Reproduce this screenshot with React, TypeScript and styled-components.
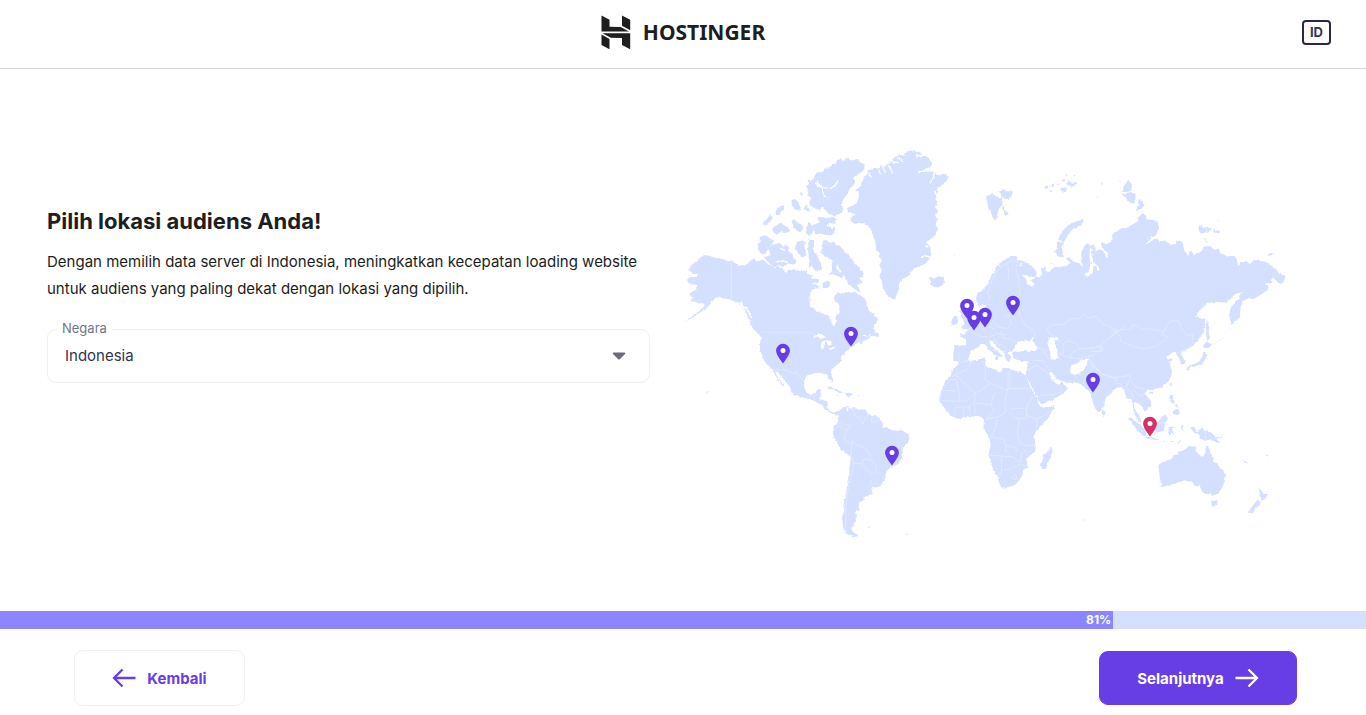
import React from "react";
import styled, { createGlobalStyle } from "styled-components";

const GlobalStyle = createGlobalStyle`
  *, *::before, *::after { box-sizing: border-box; }
  body {
    margin: 0;
    background: #fff;
    color: #1d1e20;
    font-family: Inter, "Liberation Sans", sans-serif;
  }
  button, select { font-family: inherit; }
`;

const Page = styled.div`
  min-height: 100vh;
  display: flex;
  flex-direction: column;
`;

const Header = styled.header`
  display: grid;
  grid-template-columns: 1fr auto 1fr;
  align-items: center;
  padding: 15px 35px 18px;
  border-bottom: 1px solid #d5d5d9;
`;

const Logo = styled.a`
  grid-column: 2;
  display: flex;
  align-items: center;
  gap: 12px;
  color: #1d1e20;
  text-decoration: none;
  font-family: "Noto Sans", sans-serif;
  font-size: 21px;
  line-height: 35px;
  font-weight: 700;
`;

const LanguageButton = styled.button`
  justify-self: end;
  padding: 0 6px;
  border: 2px solid #2c2545;
  border-radius: 4px;
  background: #fff;
  color: #36344d;
  font-size: 13px;
  line-height: 21px;
  font-weight: 700;
`;

const Main = styled.main`
  flex: 1;
  display: grid;
  grid-template-columns: 1fr 1fr;
  column-gap: 35px;
  align-content: center;
  padding: 0 78px 0 47px;
`;

const Intro = styled.section`
  padding-top: 65px;
`;

const Title = styled.h1`
  margin: 0 0 11px;
  font-size: 22px;
  line-height: 32px;
  font-weight: 700;
`;

const Lead = styled.p`
  margin: 0 0 27px;
  font-size: 15px;
  line-height: 27px;
`;

const Field = styled.div`
  position: relative;
`;

const FieldLabel = styled.label`
  position: absolute;
  top: -10px;
  left: 10px;
  padding: 0 5px;
  background: #fff;
  color: #727586;
  font-size: 13px;
  line-height: 18px;
`;

const Select = styled.select`
  display: block;
  width: 100%;
  height: 54px;
  padding: 0 48px 0 17px;
  appearance: none;
  border: 1px solid #f0f0f3;
  border-radius: 9px;
  background: #fff;
  color: #36344d;
  font-size: 15px;
`;

const Caret = styled.svg`
  position: absolute;
  top: 23px;
  right: 24px;
  width: 14px;
  height: 8px;
  pointer-events: none;
`;

const MapSvg = styled.svg`
  display: block;
  width: 100%;
  height: auto;
`;

const ProgressTrack = styled.div`
  height: 18px;
  background: #d5dfff;
`;

const ProgressFill = styled.div`
  height: 100%;
  padding-right: 2px;
  background: #8c85ff;
  color: #fff;
  font-size: 12px;
  line-height: 18px;
  font-weight: 700;
  text-align: right;
`;

const Footer = styled.footer`
  display: flex;
  align-items: center;
  justify-content: space-between;
  padding: 21px 69px 9px 74px;
`;

const NavButton = styled.button<{ $primary?: boolean }>`
  display: flex;
  align-items: center;
  justify-content: center;
  gap: 11px;
  height: ${(p) => (p.$primary ? 54 : 56)}px;
  width: ${(p) => (p.$primary ? 198 : 171)}px;
  padding: 0;
  border: 1px solid ${(p) => (p.$primary ? "#673de6" : "#f0f0f3")};
  border-radius: 9px;
  background: ${(p) => (p.$primary ? "#673de6" : "#fff")};
  color: ${(p) => (p.$primary ? "#fff" : "#673de6")};
  font-size: 15px;
  font-weight: 700;
`;

function Arrow({ back }: { back?: boolean }) {
  return (
    <svg width="24" height="20" viewBox="0 0 24 20" fill="none" stroke="currentColor" strokeWidth="2.3" aria-hidden="true">
      <path d={back ? "M10.5 1.5 2 10l8.5 8.5M2 10h21.5" : "M13.500 1.5 22 10l-8.500 8.500M.5 10H22"} />
    </svg>
  );
}

/* Each chart is drawn at three units per map pixel, from its own origin. */
type Chart = { x: number; y: number; land: string[]; water?: string[]; channels?: string[]; borders?: string[] };

const charts: Chart[] = [
  {
    // Alaska, Canada and the arctic archipelago
    x: 680,
    y: 140,
    land: [
      "28,380 36,374 50,362 62,352 75,345 88,347 95,350 105,353 118,355 130,358 142,364 155,362 170,372 182,378 192,374 203,372 214,362 222,354 229,364 240,362 250,360 262,370 275,378 285,385 295,382 305,385 314,392 320,400 324,390 345,388 362,394 380,390 384,402 400,408 392,416 418,418 408,434 420,440 405,446 395,450 388,475 390,500 402,508 415,515 430,522 440,525 450,530 452,545 460,558 468,550 466,532 478,520 478,495 462,478 464,466 475,458 490,460 510,455 530,458 545,468 556,478 566,510 582,524 594,538 583,560 566,570 552,582 530,590 240,590 232,576 222,570 210,548 205,530 194,506 180,490 165,486 150,478 135,476 120,470 108,474 98,482 90,492 80,505 65,514 50,525 32,536 15,542 38,528 52,518 65,508 75,496 72,490 60,492 50,486 35,485 38,474 28,462 38,454 50,448 54,436 38,432 26,430 20,420 30,412 50,410 54,404 40,402 28,392",
      "385,150 378,138 388,132 385,120 400,118 405,105 414,97 430,96 434,84 445,86 455,74 468,68 475,56 490,62 500,53 515,62 530,56 540,64 555,75 553,88 545,95 530,108 520,115 525,130 508,148 500,165 490,178 485,195 490,205 480,222 460,228 444,220 438,210 428,200 418,212 405,205 392,200 388,185 394,174 382,165",
      "240,290 255,286 270,295 283,302 272,316 258,340 245,342 233,328 238,310",
      "265,322 285,312 300,310 310,320 322,315 325,330 338,342 340,354 350,362 344,375 325,370 312,380 298,376 285,382 270,372 252,352 272,346",
      "275,265 288,258 300,248 312,258 325,262 330,274 315,280 302,276 290,284 280,276",
      "248,250 258,240 270,225 280,232 272,242 262,252 252,258",
      "285,215 300,198 312,196 314,208 300,218 304,226 290,224",
      "335,180 345,178 355,186 362,204 354,214 342,204 334,194",
      "372,196 380,192 386,205 388,216 376,210",
      "334,242 345,238 352,250 366,252 370,266 358,276 344,268",
      "385,245 398,256 400,275 388,288 378,278",
      "398,256 418,248 412,236 425,230 440,236 458,230 470,238 466,252 448,248 440,258 462,264 462,280 440,286 420,280 404,284",
      "350,308 364,300 378,308 374,324 380,345 368,352 356,342 344,326",
      "385,300 402,300 402,330 412,350 424,372 426,388 412,396 398,380 386,384 388,362 384,330",
      "425,318 430,302 442,300 452,310 462,302 468,318 478,316 495,336 512,352 526,370 538,384 553,402 548,412 538,412 548,428 532,434 542,458 522,446 510,436 500,428 494,404 480,390 472,372 450,356 436,352 424,338",
      "455,362 474,368 468,384 480,398 496,382 498,406 480,414 462,402 450,404 456,388",
      "428,428 446,422 452,432 444,444 428,444",
      "362,156 368,160 366,166 360,162",
    ],
    water: ["488,414 500,424 510,444 498,440 486,428"],
    channels: [
      "410,124 426,142 450,146 464,138 474,124",
      "426,144 432,168 444,174",
      "424,142 404,128",
      "290,366 308,362 322,368",
      "398,432 412,430",
      "172,486 200,506 216,536",
      "182,482 188,496",
      "316,332 302,324",
    ],
    borders: ["154,362 154,478 178,490 196,516 214,548 222,556", "245,577 385,577 398,582 416,592"],
  },
  {
    // United States, central and south America
    x: 680,
    y: 310,
    land: [
      "222,58 240,60 300,60 530,60 570,40 578,45 560,58 545,64 532,80 550,66 566,60 572,50 580,54 582,66 596,70 596,80 575,78 565,86 545,100 536,96 520,108 500,120 490,136 482,140 485,152 470,166 455,178 452,190 460,208 457,218 448,208 440,192 425,190 410,188 395,192 382,196 373,208 372,230 380,248 392,255 406,250 410,240 425,238 424,250 418,268 430,270 442,276 442,292 448,302 460,308 472,303 480,310 472,318 458,312 446,306 436,298 430,288 416,280 400,272 392,266 380,266 360,260 335,248 330,232 316,214 300,195 290,182 286,186 294,202 304,216 314,230 306,226 290,204 276,176 262,166 252,150 240,120 240,100 246,82 234,66",
      "475,305 490,292 506,288 510,296 520,294 538,299 555,298 562,308 575,318 590,318 602,328 610,345 606,354 622,352 635,360 650,362 665,362 680,370 689,382 684,398 668,415 668,435 655,462 645,466 632,472 618,485 618,500 608,518 598,530 585,534 572,528 578,550 562,558 550,560 552,570 536,578 536,590 540,600 525,606 532,620 522,640 514,656 524,668 535,678 520,682 500,672 490,655 486,630 488,612 494,602 490,585 496,560 500,540 503,510 508,490 510,465 512,440 495,428 480,415 470,394 458,374 462,362 460,350 472,340 476,324",
      "440,233 452,230 466,236 480,242 490,250 476,248 462,238 448,237",
      "494,250 508,248 522,254 512,260 496,257",
      "468,252 478,254 472,257",
      "530,255 538,254 538,258",
      "79,244 85,246 84,251 79,250",
      "560,650 574,648 566,654",
      "676,669 684,673 680,676",
      "402,350 406,350 405,353",
    ],
    water: [
      "402,84 410,74 420,71 430,76 438,82 426,86 414,84",
      "424,96 436,90 434,104 430,118 422,112",
      "438,90 452,94 456,104 444,106",
      "444,116 456,114 466,108 464,114 452,120",
    ],
    channels: ["500,292 504,304", "552,78 572,74"],
    borders: [
      "276,178 318,180 338,190 348,186 362,204 372,212",
      "405,276 402,262 412,254",
      "470,348 484,350 496,362 512,346 494,342",
      "512,346 498,368 492,386 516,404 516,392 530,404 552,412 570,432 572,448 590,470 588,486 596,494",
      "516,404 512,438 522,460 518,480 508,520 500,560 498,610 496,652",
      "522,460 544,462 552,446 570,450",
      "546,464 570,486 574,494 584,486",
      "574,508 572,528",
      "520,296 524,316 540,322 548,342 558,320 568,314",
      "576,320 574,338 590,334 602,332",
      "480,334 490,346",
    ],
  },
  {
    // Greenland and Iceland
    x: 820,
    y: 140,
    land: [
      "80,205 94,198 110,190 116,174 116,156 108,150 120,140 125,125 138,106 145,90 158,88 164,80 176,84 184,74 194,80 205,68 218,66 218,56 235,46 252,44 262,34 285,31 300,35 308,46 325,52 335,68 333,80 320,84 308,92 325,92 342,94 354,106 370,102 385,112 378,124 362,136 350,150 355,162 346,176 352,186 345,200 355,215 345,226 352,240 346,252 354,268 344,286 334,298 316,306 330,318 334,338 330,355 318,368 305,378 288,382 276,392 262,410 245,418 236,438 232,460 225,480 212,474 202,468 194,452 188,440 186,422 178,405 186,392 178,375 186,360 176,350 180,340 168,330 166,305 160,290 154,270 145,258 132,252 118,248 105,252 96,246 90,236 98,228 110,224 96,220 84,212",
      "326,414 334,410 340,418 352,410 366,408 374,418 374,430 362,438 352,444 338,438 330,434 334,426",
      "402,344 404,344 404,347 402,347",
    ],
    channels: [
      "172,80 182,104",
      "186,78 196,98",
      "204,74 220,102",
      "142,96 156,114",
      "330,130 342,108 344,94",
      "294,96 328,92 350,94",
      "232,52 250,64",
      "218,66 236,68",
      "288,48 312,46",
      "302,352 318,348 332,352",
      "316,318 330,322",
      "172,352 186,358",
      "344,152 352,170",
    ],
  },
  {
    // Europe, western Russia and the islands north of it
    x: 940,
    y: 160,
    land: [
      "110,430 108,414 114,398 130,386 148,368 152,350 164,334 172,316 186,304 200,297 210,292 220,286 236,292 232,300 250,303 275,318 290,336 288,350 272,352 256,346 246,344 260,360 260,372 276,380 286,372 274,360 290,350 298,352 306,342 302,326 316,320 318,332 328,336 342,322 360,320 380,318 392,308 378,296 384,292 404,306 418,310 430,322 422,300 424,280 432,260 440,250 450,258 448,290 452,308 448,330 432,345 444,350 458,340 460,318 468,318 472,332 480,330 470,314 460,304 454,284 458,268 450,256 462,256 468,272 480,268 492,274 498,290 504,298 502,276 486,262 482,246 500,252 520,240 515,228 526,214 560,204 560,620 266,620 268,600 248,604 234,600 222,596 216,580 226,570 214,572 204,578 214,590 208,606 198,600 190,576 170,560 158,545 148,540 150,552 165,568 188,588 176,590 172,602 164,596 170,588 146,568 135,552 122,552 116,562 100,568 86,582 88,590 80,602 58,610 52,604 40,602 40,580 44,562 40,556 78,556 78,538 62,530 60,522 74,520 94,502 112,484 130,470 132,450 138,442 146,460 156,470 168,454 176,436 172,410 176,390 190,372 194,358 210,362 208,378 194,396 192,416 206,424 224,424 200,434 196,448 186,450 190,466 168,474 150,474 142,486 122,488 116,460 138,438 128,432 118,440",
      "62,436 82,448 86,480 94,498 86,508 62,508 74,490 60,462",
      "36,480 40,472 52,468 54,488 46,494 34,496",
      "138,108 150,104 158,98 164,108 182,112 188,128 176,148 168,182 158,174 152,154 146,146",
      "176,92 190,88 204,94 218,94 216,108 200,118 186,112",
      "186,142 192,138 196,150 206,160 196,166",
      "430,176 430,186 418,198 400,206 384,224 374,242 364,262 372,292 356,290 344,274 354,264 350,250 358,230 368,212 384,196 404,186 418,182",
      "312,82 322,76 330,82 320,86",
      "326,90 338,92 334,98",
      "332,76 344,70 340,82",
      "348,70 360,72 352,76",
      "360,86 376,82 382,90 368,98",
      "364,60 376,58 372,66",
      "376,42 384,44 378,48",
      "384,62 396,68 410,66 412,74 394,80 384,74",
      "400,46 406,44 404,50",
      "483,70 488,70 488,74 484,74",
      "468,110 474,110 472,113",
      "328,312 334,310 332,316",
      "0,46 18,42 24,54 10,72 0,78",
    ],
    water: [
      "222,566 234,546 250,540 256,550 272,542 274,532 282,532 278,544 294,564 284,572 262,566 244,572 232,572",
      "320,546 334,532 350,532 354,542 342,552 350,564 348,572 356,584 354,600 338,600 332,586 332,570",
    ],
    channels: ["246,310 238,316", "352,240 368,246", "172,310 180,318"],
    borders: [
      "150,420 144,398 156,360 174,330 200,308 212,304 234,302",
      "202,310 206,332 206,358",
      "234,304 228,322 240,380 240,400 226,424",
      "236,454 250,490 282,512 286,528 278,536",
      "158,480 170,500 200,506 214,494 206,470 192,464",
      "88,512 120,528 146,532 170,520 200,524",
      "122,490 126,508 146,500 166,508",
      "322,504 338,494 370,494 390,478 422,474 434,464 448,474 470,468 486,490 516,502 534,514 514,530 488,548 480,560 442,566 422,566 408,550 386,542 370,550 370,584 356,580",
      "320,504 328,520 348,530",
      "182,512 190,534 208,536 230,546",
      "162,536 176,556 188,552 204,574",
      "284,556 306,568 330,572",
      "422,566 400,574 390,592",
      "452,574 484,574 488,562 470,558",
      "56,566 58,604",
      "534,514 560,496",
    ],
  },
  {
    // Africa, the Middle East and western India
    x: 920,
    y: 340,
    land: [
      "118,68 134,66 150,62 170,60 190,55 198,60 194,74 202,82 218,86 236,97 246,94 248,84 262,84 288,93 306,98 318,108 330,138 346,166 354,180 360,198 374,205 402,198 400,210 386,232 372,248 350,270 340,290 347,315 346,334 328,348 320,358 322,380 310,390 308,405 296,424 285,435 268,440 245,443 238,430 230,405 220,392 215,372 205,345 212,315 208,292 190,265 192,238 176,228 165,228 140,232 120,234 105,235 85,218 72,202 62,190 58,178 65,150 75,125 92,108 100,85 112,76",
      "305,30 380,30 380,0 600,0 600,143 590,140 575,148 566,160 548,180 546,205 534,217 526,204 518,184 512,160 506,152 496,146 488,134 470,128 440,128 426,122 408,116 396,96 386,98 396,116 404,130 418,132 426,124 432,134 445,144 430,160 400,180 382,186 364,193 358,184 346,160 326,124 316,104 326,66 316,62 284,56 280,42",
      "545,210 552,214 554,224 546,226",
      "393,320 398,334 390,352 384,372 378,386 368,388 362,376 368,360 368,344 384,336",
      "490,538 497,540 492,544",
    ],
    water: [
      "386,0 406,0 404,8 412,30 414,54 402,60 392,56 390,34 382,10",
      "450,92 454,76 468,72 486,60 504,54 502,70 494,88 480,100 462,106 454,102",
      "280,34 290,14 306,4 318,0 352,24 344,36 316,30 298,36",
    ],
    borders: [
      "152,62 148,84 106,104 94,112",
      "106,104 166,160 212,130 264,152 264,96",
      "188,62 196,90 196,120 212,130",
      "78,120 108,118 116,152 118,184 66,182",
      "270,90 270,146 330,146",
      "66,150 108,154",
      "118,184 140,182 166,160 162,188 212,194 222,162",
      "264,146 252,196 260,214 232,232 216,234 198,238",
      "162,188 166,222",
      "212,194 222,212 198,238",
      "104,202 106,232 M130,206 132,232 M148,200 150,230",
      "104,202 148,200 160,188",
      "270,208 284,206 320,204 332,180 342,166",
      "320,204 320,226 350,238 374,226 392,214",
      "350,238 350,266",
      "266,212 288,236 320,236 320,226",
      "230,236 228,260 214,290 232,294 252,296 256,316 278,320 296,334",
      "298,240 292,272 298,308 314,316 346,316",
      "206,346 276,350 256,330 258,318",
      "244,350 244,402 232,406",
      "246,392 274,386 302,372 322,378",
      "276,350 300,368 306,338 324,330",
      "278,412 288,404 292,414 282,420 278,412",
      "326,60 370,62 390,92",
      "326,88 352,76 384,100",
      "364,166 400,164 424,156 420,136",
      "370,32 386,56",
      "504,54 522,76 512,94 496,110 490,132",
      "520,76 540,100 592,118",
      "420,44 448,52 480,56 520,46 548,22",
    ],
  },
  {
    // Siberia, Mongolia and northern Japan
    x: 1110,
    y: 170,
    land: [
      "0,215 12,205 8,196 16,186 35,175 50,174 65,165 78,160 86,150 80,146 98,130 110,138 108,148 130,150 144,158 147,176 140,190 124,204 105,225 124,214 136,204 150,213 166,212 180,224 196,222 200,210 218,218 222,240 235,258 240,243 252,252 275,246 280,230 300,228 314,240 326,236 332,248 350,258 370,258 380,268 385,290 390,275 410,276 420,282 432,270 446,272 465,275 482,286 500,300 510,312 518,314 528,322 515,342 504,338 492,322 482,330 484,340 465,340 475,350 473,362 452,374 430,388 416,384 400,392 392,410 390,440 376,452 365,468 358,440 360,420 368,404 386,388 390,372 403,365 375,372 350,398 320,396 295,398 272,418 255,440 268,440 274,448 285,445 285,470 280,490 262,512 245,530 228,540 212,548 216,562 226,580 216,584 210,570 204,552 190,545 168,560 176,566 188,566 178,576 184,600 0,600",
      "290,445 294,460 298,470 296,482 300,502 293,514 289,500 288,470",
      "288,514 306,526 296,532 284,534",
      "286,545 288,570 270,583 245,590 236,600 232,590 255,582 268,572 278,558 280,546",
      "42,48 48,40 56,30 66,45 64,62 50,66 38,65",
      "34,70 44,72 60,66 77,72 75,100 62,100 50,88",
      "86,86 94,92 104,104 96,114 78,122 84,106",
      "28,34 34,34 30,37",
      "264,172 270,164 278,170 290,172 288,190 270,190",
      "290,170 303,175 300,187 290,185",
      "310,178 332,183 326,190 312,186",
      "282,203 288,210 296,217 286,216",
      "475,255 480,248 492,252 478,257",
      "320,150 326,150 326,153",
    ],
    borders: [
      "0,478 18,486 38,478 64,478 68,464 88,470 92,478 116,476 136,480 160,486 176,460 186,450 206,452 218,484 232,496 250,492 248,516 238,532 204,548",
      "14,486 30,498 34,516 74,530 100,538 134,530 176,502 156,494 160,486",
      "14,486 0,506",
      "308,524 324,514 344,500 M350,486 362,474",
    ],
  },
  {
    // East Asia, Indonesia, Australia and New Zealand
    x: 1090,
    y: 340,
    land: [
      "0,0 290,0 275,20 262,34 248,34 240,44 226,50 232,56 250,56 234,70 246,92 244,106 236,124 215,142 198,146 186,152 174,148 164,160 182,182 184,196 170,212 162,210 154,198 140,190 132,184 132,204 146,224 154,240 154,250 140,238 130,212 128,190 122,176 112,176 104,158 98,142 84,140 72,150 46,178 40,205 25,217 15,205 0,160",
      "36,212 42,212 46,224 40,228",
      "262,44 274,44 280,54 286,66 274,72 270,60",
      "286,84 300,76 322,70 334,62 340,48 340,36 347,40 348,54 340,68 324,76 304,82 294,92 290,90",
      "338,20 348,6 354,12 366,14 354,24 344,24",
      "240,130 246,128 244,142",
      "178,157 190,154 188,162 180,164",
      "240,165 250,165 248,180 256,190 246,190 240,180",
      "248,214 256,208 266,208 270,220 260,226 250,220",
      "252,196 262,196 262,204",
      "113,232 122,232 142,248 166,268 170,290 156,286 138,266",
      "164,290 180,290 204,298 214,300 196,300 172,296",
      "190,248 206,244 214,232 226,224 234,238 226,246 222,272 210,276 196,274 190,262",
      "236,262 246,260 260,262 246,264 250,282 244,276 242,286 236,284",
      "300,262 312,260 320,274 334,266 354,272 374,284 376,294 390,308 374,306 362,298 346,302 330,296 328,284 312,278",
      "374,290 390,292 398,284 396,294 380,296",
      "218,304 234,302 226,307",
      "238,304 254,302 248,306",
      "268,302 276,302 260,312",
      "274,256 280,254 278,266 284,276 274,268",
      "205,375 214,368 230,362 245,356 252,344 262,345 268,334 280,332 288,326 296,318 320,320 318,334 334,350 342,348 346,332 350,315 358,326 364,344 370,360 384,374 398,390 407,406 404,424 398,440 386,460 368,467 360,462 342,462 334,450 328,434 320,442 312,430 300,424 282,422 264,426 248,436 228,438 215,442 212,426 208,402",
      "362,481 372,485 382,483 378,498 368,501",
      "507,445 516,454 520,462 534,462 526,476 514,484 510,470",
      "504,478 513,488 496,504 488,520 472,518 486,500",
      "458,360 464,362 474,370 468,370",
      "528,346 536,342 534,350",
      "418,294 428,302 M436,308 440,312",
    ],
    borders: [
      "0,74 34,100 70,112 96,110 118,106 122,122 134,140 160,148",
      "78,114 78,130 94,132 96,144",
      "118,120 108,142 126,158 130,180",
      "130,148 144,166 166,164",
      "138,188 152,190 154,200",
      "346,270 346,302",
      "192,262 210,250 222,246",
      "0,62 18,84 30,94",
    ],
    water: ["180,154 186,150 192,152 188,156"],
  },
];

const toPath = (points: string) => "M" + points;

const pins = [
  { x: 783, y: 363 },
  { x: 851, y: 346 },
  { x: 892, y: 465 },
  { x: 967, y: 318 },
  { x: 974, y: 330 },
  { x: 985, y: 327 },
  { x: 1013, y: 315 },
  { x: 1093, y: 392 },
  { x: 1150, y: 436, selected: true },
];

function WorldMap() {
  return (
    <MapSvg viewBox="685 140 603 401" role="img" aria-label="Peta lokasi server">
      <defs>
        <filter id="coast" x="0" y="0" width="100%" height="100%">
          <feTurbulence type="fractalNoise" baseFrequency="0.3" numOctaves="2" seed="4" />
          <feDisplacementMap in="SourceGraphic" scale="3" xChannelSelector="R" yChannelSelector="G" />
        </filter>
      </defs>
      <g filter="url(#coast)">
        {charts.map((c) => (
          <g key={`${c.x}-${c.y}`} transform={`translate(${c.x} ${c.y}) scale(.33333)`} strokeLinejoin="round">
            {c.land.map((p) => (
              <path key={p} d={toPath(p) + "Z"} fill="#d5dfff" />
            ))}
            {c.water?.map((p) => (
              <path key={p} d={toPath(p) + "Z"} fill="#fff" />
            ))}
            {c.channels?.map((p) => (
              <path key={p} d={toPath(p)} fill="none" stroke="#fff" strokeWidth="4" />
            ))}
          </g>
        ))}
      </g>
      {charts.map((c) => (
        <g key={`${c.x}-${c.y}`} transform={`translate(${c.x} ${c.y}) scale(.33333)`} fill="none" stroke="#e9eeff" strokeWidth="2">
          {c.borders?.map((p) => (
            <path key={p} d={toPath(p)} />
          ))}
        </g>
      ))}
      {pins.map((p) => (
        <g key={`${p.x}-${p.y}`} transform={`translate(${p.x} ${p.y})`}>
          <path
            fill={p.selected ? "#d63163" : "#673de6"}
            d="M0 .5C-2-2.200-6.900-8-6.900-12.400A6.900 6.800 0 0 1 6.900-12.400C6.900-8 2-2.200 0 .5Z"
          />
          <circle cy="-12.400" r="2.500" fill="#fff" />
        </g>
      ))}
    </MapSvg>
  );
}

export default function App() {
  const progress = 81.5;
  return (
    <Page>
      <GlobalStyle />
      <Header>
        <Logo href="#">
          <svg width="30" height="35" viewBox="0 0 30 35" fill="currentColor" aria-hidden="true">
            <path d="M.5 16.500V.5L8.500 4.800V11.800L19.500 11.900L28 16.500ZM21 10.700V.5L29.200 4.700V15.300Z" />
            <path d="M21 29.900V22.900L9.800 22.800L1.500 18.200L29.200 18.300V34.200ZM.5 29.900V19.500L8.500 24.100V34.200Z" />
          </svg>
          <span>HOSTINGER</span>
        </Logo>
        <LanguageButton type="button">ID</LanguageButton>
      </Header>
      <Main>
        <Intro>
          <Title>Pilih lokasi audiens Anda!</Title>
          <Lead>
            Dengan memilih data server di Indonesia, meningkatkan kecepatan loading website untuk audiens yang paling
            dekat dengan lokasi yang dipilih.
          </Lead>
          <Field>
            <Select id="country" defaultValue="Indonesia">
              <option>Indonesia</option>
            </Select>
            <FieldLabel htmlFor="country">Negara</FieldLabel>
            <Caret viewBox="0 0 14 8" aria-hidden="true">
              <path d="M1.500 .5H12.500Q14 1 13 2L8 7Q7 8 6 7L1 2Q0 1 1.500 .5Z" fill="#6d6a80" />
            </Caret>
          </Field>
        </Intro>
        <WorldMap />
      </Main>
      <ProgressTrack>
        <ProgressFill style={{ width: `${progress}%` }}>{Math.floor(progress)}%</ProgressFill>
      </ProgressTrack>
      <Footer>
        <NavButton type="button">
          <Arrow back />
          Kembali
        </NavButton>
        <NavButton type="button" $primary>
          Selanjutnya
          <Arrow />
        </NavButton>
      </Footer>
    </Page>
  );
}
